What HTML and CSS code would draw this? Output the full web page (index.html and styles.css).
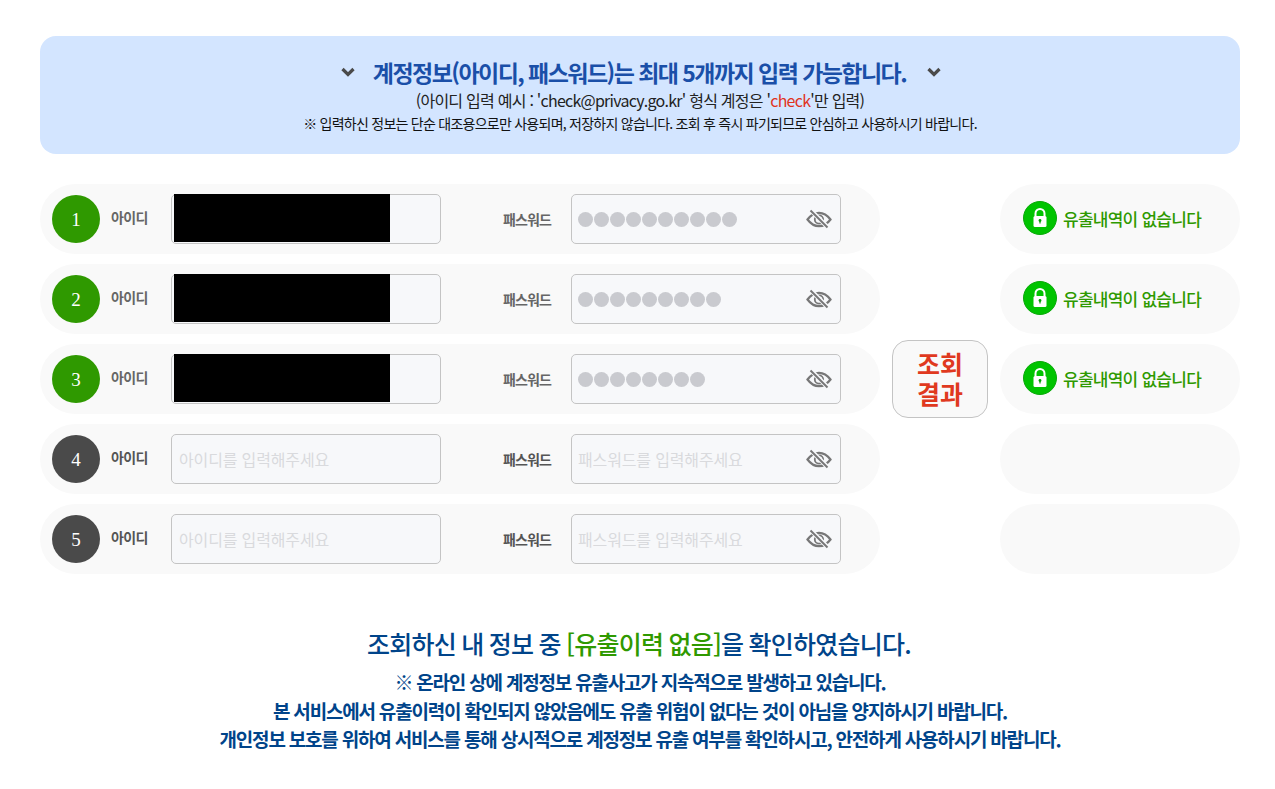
FILE: index.html
```html
<!DOCTYPE html>
<html lang="ko">
<head>
<meta charset="utf-8">
<title>계정정보 유출 조회</title>
<link rel="stylesheet" href="styles.css">
</head>
<body>
<svg class="defs" width="0" height="0" aria-hidden="true">
  <symbol id="eye" viewBox="0 0 26 20">
    <path d="M1.500 10.500C5 5.800 8.800 3.800 13 3.800s8 2 11.500 6.700C21 15.200 17.200 17.200 13 17.200S5 15.200 1.500 10.500Z" fill="none" stroke="#777" stroke-width="2.200"/>
    <circle cx="13" cy="10.500" r="4.200" fill="none" stroke="#777" stroke-width="1.800"/>
    <path d="M5 1.500 22 18.500" stroke="#f7f8fa" stroke-width="4.500"/>
    <path d="M4.500 1.500 21.500 18.500" stroke="#777" stroke-width="2"/>
  </symbol>
  <symbol id="lock" viewBox="0 0 34 34">
    <circle cx="17" cy="17" r="16.500" fill="#00c400" stroke="#0aa80a" stroke-width="1"/>
    <path d="M12.500 15.500v-3a4.500 4.500 0 0 1 9 0v3" fill="none" stroke="#fff" stroke-width="2"/>
    <rect x="10.500" y="15" width="13" height="11" rx="1.500" fill="#fff"/>
    <circle cx="17" cy="19.500" r="1.400" fill="#00a000"/>
    <rect x="16.400" y="19.500" width="1.200" height="3" fill="#00a000"/>
  </symbol>
</svg>

<main class="page">
  <section class="notice">
    <h1 class="notice-title">
      <svg class="chev" viewBox="0 0 14 10" aria-hidden="true"><path d="M1.500 2 7 7.500 12.500 2" fill="none" stroke="#4a4a4a" stroke-width="3.200"/></svg>
      <span>계정정보(아이디, 패스워드)는 최대 5개까지 입력 가능합니다.</span>
      <svg class="chev chev-end" viewBox="0 0 14 10" aria-hidden="true"><path d="M1.500 2 7 7.500 12.500 2" fill="none" stroke="#4a4a4a" stroke-width="3.200"/></svg>
    </h1>
    <p class="notice-example">(아이디 입력 예시 : 'check@privacy.go.kr' 형식 계정은 '<em>check</em>'만 입력)</p>
    <p class="notice-small">※ 입력하신 정보는 단순 대조용으로만 사용되며, 저장하지 않습니다. 조회 후 즉시 파기되므로 안심하고 사용하시기 바랍니다.</p>
  </section>

  <section class="board">
    <div class="row row-done">
      <span class="num">1</span>
      <label class="lbl-id">아이디</label>
      <div class="field"><i class="redact"></i></div>
      <label class="lbl-pw">패스워드</label>
      <div class="field field-pw">
        <span class="dots"><i></i><i></i><i></i><i></i><i></i><i></i><i></i><i></i><i></i><i></i></span>
        <svg class="eye"><use href="#eye"/></svg>
      </div>
    </div>
    <div class="result"><svg class="lock"><use href="#lock"/></svg><span>유출내역이 없습니다</span></div>

    <div class="row row-done">
      <span class="num">2</span>
      <label class="lbl-id">아이디</label>
      <div class="field"><i class="redact"></i></div>
      <label class="lbl-pw">패스워드</label>
      <div class="field field-pw">
        <span class="dots"><i></i><i></i><i></i><i></i><i></i><i></i><i></i><i></i><i></i></span>
        <svg class="eye"><use href="#eye"/></svg>
      </div>
    </div>
    <div class="result"><svg class="lock"><use href="#lock"/></svg><span>유출내역이 없습니다</span></div>

    <div class="row row-done">
      <span class="num">3</span>
      <label class="lbl-id">아이디</label>
      <div class="field"><i class="redact"></i></div>
      <label class="lbl-pw">패스워드</label>
      <div class="field field-pw">
        <span class="dots"><i></i><i></i><i></i><i></i><i></i><i></i><i></i><i></i></span>
        <svg class="eye"><use href="#eye"/></svg>
      </div>
    </div>
    <div class="result"><svg class="lock"><use href="#lock"/></svg><span>유출내역이 없습니다</span></div>

    <div class="row">
      <span class="num">4</span>
      <label class="lbl-id">아이디</label>
      <div class="field"><span class="ph">아이디를 입력해주세요</span></div>
      <label class="lbl-pw">패스워드</label>
      <div class="field field-pw">
        <span class="ph">패스워드를 입력해주세요</span>
        <svg class="eye"><use href="#eye"/></svg>
      </div>
    </div>
    <div class="result"></div>

    <div class="row">
      <span class="num">5</span>
      <label class="lbl-id">아이디</label>
      <div class="field"><span class="ph">아이디를 입력해주세요</span></div>
      <label class="lbl-pw">패스워드</label>
      <div class="field field-pw">
        <span class="ph">패스워드를 입력해주세요</span>
        <svg class="eye"><use href="#eye"/></svg>
      </div>
    </div>
    <div class="result"></div>

    <div class="mid"><button class="query" type="button">조회<br>결과</button></div>
  </section>

  <section class="summary">
    <h2 class="summary-title">조회하신 내 정보 중 <b>[유출이력 없음]</b>을 확인하였습니다.</h2>
    <p>※ 온라인 상에 계정정보 유출사고가 지속적으로 발생하고 있습니다.</p>
    <p>본 서비스에서 유출이력이 확인되지 않았음에도 유출 위험이 없다는 것이 아님을 양지하시기 바랍니다.</p>
    <p>개인정보 보호를 위하여 서비스를 통해 상시적으로 계정정보 유출 여부를 확인하시고, 안전하게 사용하시기 바랍니다.</p>
  </section>
</main>
</body>
</html>
```

FILE: styles.css
```css
* { box-sizing: border-box; }
html, body { margin: 0; padding: 0; background: #fff; }
body { font-family: "Noto Sans CJK KR", "Noto Sans", sans-serif; color: #222; overflow: hidden; }
.defs { position: absolute; }

.page { width: 1275px; height: 789px; padding: 36px 35px 0 40px; }

.notice { height: 118px; background: #d3e5ff; border-radius: 16px; text-align: center; padding-top: 19px; }
.notice-title { margin: 0 0 -1px; height: 34px; display: flex; justify-content: center; align-items: center; gap: 18px; padding-left: 2px; font-size: 23px; font-weight: 700; letter-spacing: -1.55px; color: #1a4fa8; line-height: 34px; }
.chev { width: 14px; height: 10px; flex: none; }
.chev-end { margin-left: 3px; }
.notice-example { margin: 0; height: 24px; font-size: 16px; line-height: 24px; letter-spacing: -0.75px; color: #222; }
.notice-example em { font-style: normal; color: #e0341e; }
.notice-small { margin: 0; height: 22px; font-size: 14px; line-height: 22px; letter-spacing: -0.75px; color: #111; }

.board { margin-top: 30px; display: grid; grid-template-columns: 840px 120px 240px; grid-auto-rows: 70px; row-gap: 10px; }
.row { grid-column: 1; display: flex; align-items: center; background: #f9f9f9; border-radius: 35px; padding-left: 12px; }
.result { grid-column: 3; background: #f9f9f9; border-radius: 35px; display: flex; align-items: center; padding-left: 23px; color: #2f9900; font-size: 17px; font-weight: 500; letter-spacing: -0.75px; gap: 6px; }
.result span { position: relative; top: -1px; }
.lock { width: 34px; height: 34px; flex: none; position: relative; top: -1px; }

.num { width: 48px; height: 48px; flex: none; border-radius: 50%; background: #4a4a4a; color: #fff; display: flex; align-items: center; justify-content: center; font-family: "Liberation Serif", serif; font-size: 19px; padding-top: 2px; }
.row-done .num { background: #2f9900; }

.lbl-id, .lbl-pw { font-size: 14px; font-weight: 700; color: #555; letter-spacing: -0.6px; flex: none; }
.row-done .lbl-id, .row-done .lbl-pw { color: #666; }
.lbl-id { width: 60px; margin-left: 11px; position: relative; top: -2px; }
.lbl-pw { width: 68px; margin-left: 62px; letter-spacing: -0.85px; }

.field { width: 270px; height: 50px; flex: none; position: relative; background: #f7f8fa; border: 1px solid #c4c4c4; border-radius: 5px; display: flex; align-items: center; padding-left: 7px; }
.field-pw { padding-left: 6px; }
.ph { font-size: 16px; color: #d9dadd; letter-spacing: -0.15px; }
.redact { position: absolute; left: 2px; top: -1px; width: 216px; height: 48px; background: #000; }
.dots { display: flex; gap: 1px; margin-top: 1px; }
.dots i { width: 15px; height: 15px; border-radius: 50%; background: #c9cacf; }
.eye { position: absolute; right: 8px; top: 14px; width: 26px; height: 20px; }

.mid { grid-column: 2; grid-row: 1 / span 5; display: flex; align-items: center; justify-content: center; }
.query { width: 96px; height: 78px; background: #f9f9f9; border: 1px solid #c4c4c4; border-radius: 16px; padding: 0 0 2px; font-family: inherit; font-size: 25px; font-weight: 700; line-height: 30px; color: #e0391f; }

.summary { margin-top: 49px; text-align: center; color: #00448a; font-size: 19px; font-weight: 700; letter-spacing: -1.2px; }
.summary-title { margin: 0 0 5px; padding-right: 2px; font-size: 25px; line-height: 40px; font-weight: 500; letter-spacing: -0.75px; word-spacing: -1px; color: #00448a; }
.summary-title b { font-weight: 500; color: #2f9900; }
.summary p { margin: 0; line-height: 28.5px; }
```
